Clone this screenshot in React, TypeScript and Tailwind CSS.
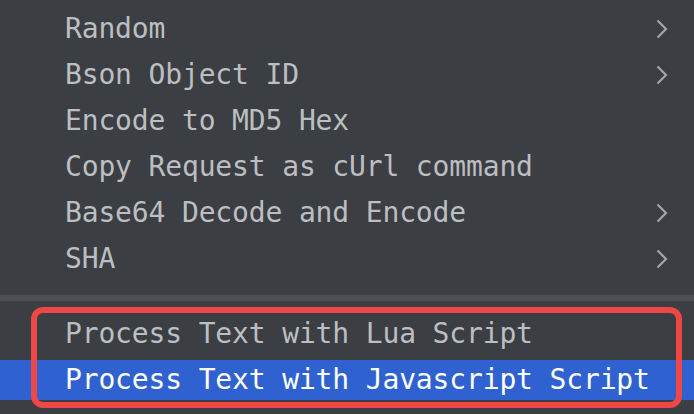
import { Fragment } from "react";

type Item = { label: string; submenu?: boolean };

const topItems: Item[] = [
  { label: "Random", submenu: true },
  { label: "Bson Object ID", submenu: true },
  { label: "Encode to MD5 Hex" },
  { label: "Copy Request as cUrl command" },
  { label: "Base64 Decode and Encode", submenu: true },
  { label: "SHA", submenu: true },
];

function Chevron() {
  return (
    <svg viewBox="0 0 12 20" className="h-5 w-3" aria-hidden="true">
      <path d="M1.5 1.5 10 10l-8.5 8.5" fill="none" stroke="#a3a6aa" strokeWidth="2.2" />
    </svg>
  );
}

function Row({ item, active }: { item: Item; active?: boolean }) {
  return (
    <div
      className={`flex h-10 items-center justify-between pl-[65px] pr-[26px] ${
        active ? "bg-[#2f62d0] text-white" : "text-[#bcbec1]"
      }`}
    >
      <span>{item.label}</span>
      {item.submenu ? <Chevron /> : null}
    </div>
  );
}

export default function App() {
  return (
    <div
      className="relative h-[414px] w-[694px] overflow-hidden bg-[#3b3e42] pt-[9px] text-[28px] leading-none tracking-[-0.15px]"
      style={{ fontFamily: '"DejaVu Sans Mono", "Liberation Mono", monospace' }}
    >
      <div className="flex flex-col gap-[6px]">
        {topItems.map((item) => (
          <Fragment key={item.label}>
            <Row item={item} />
          </Fragment>
        ))}
      </div>
      <div className="mt-[16px] h-[6px] bg-[#4c4f53]" />
      <div className="mt-[13px] flex flex-col gap-[6px]">
        <Row item={{ label: "Process Text with Lua Script" }} />
        <Row item={{ label: "Process Text with Javascript Script" }} active />
      </div>
      <div className="pointer-events-none absolute left-[31px] top-[307px] h-[101px] w-[651px] rounded-[12px] border-[6px] border-[#ef4646]" />
    </div>
  );
}
